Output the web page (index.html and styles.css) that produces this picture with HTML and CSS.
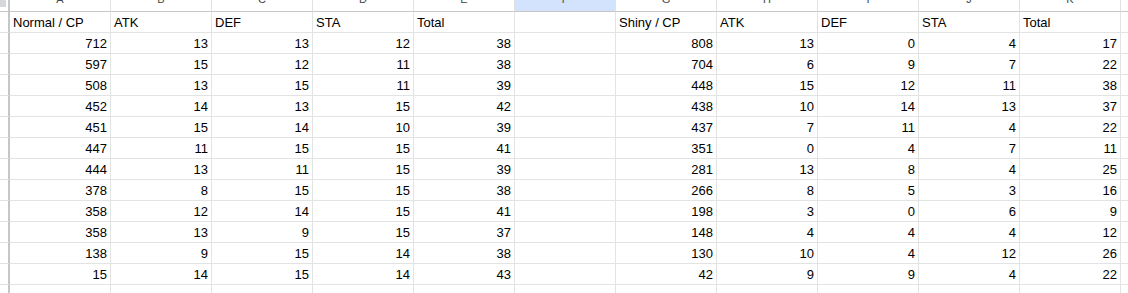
FILE: index.html
```html
<!DOCTYPE html>
<html>
<head>
<meta charset="utf-8">
<link rel="stylesheet" href="styles.css">
</head>
<body>
<div class="sheet">
  <div class="corner"><span class="knob"></span></div>
  <div class="ch"><span>A</span></div><div class="ch"><span>B</span></div><div class="ch"><span>C</span></div><div class="ch"><span>D</span></div><div class="ch"><span>E</span></div><div class="ch sel"><span>F</span></div><div class="ch"><span>G</span></div><div class="ch"><span>H</span></div><div class="ch"><span>I</span></div><div class="ch"><span>J</span></div><div class="ch"><span>K</span></div><div class="ch last"></div>

  <div class="rh"></div>
  <div class="c">Normal / CP</div><div class="c">ATK</div><div class="c">DEF</div><div class="c">STA</div><div class="c">Total</div><div class="c"></div><div class="c">Shiny / CP</div><div class="c">ATK</div><div class="c">DEF</div><div class="c">STA</div><div class="c">Total</div><div class="c last"></div>

  <div class="rh"></div>
  <div class="c n">712</div><div class="c n">13</div><div class="c n">13</div><div class="c n">12</div><div class="c n">38</div><div class="c"></div><div class="c n">808</div><div class="c n">13</div><div class="c n">0</div><div class="c n">4</div><div class="c n">17</div><div class="c last"></div>

  <div class="rh"></div>
  <div class="c n">597</div><div class="c n">15</div><div class="c n">12</div><div class="c n">11</div><div class="c n">38</div><div class="c"></div><div class="c n">704</div><div class="c n">6</div><div class="c n">9</div><div class="c n">7</div><div class="c n">22</div><div class="c last"></div>

  <div class="rh"></div>
  <div class="c n">508</div><div class="c n">13</div><div class="c n">15</div><div class="c n">11</div><div class="c n">39</div><div class="c"></div><div class="c n">448</div><div class="c n">15</div><div class="c n">12</div><div class="c n">11</div><div class="c n">38</div><div class="c last"></div>

  <div class="rh"></div>
  <div class="c n">452</div><div class="c n">14</div><div class="c n">13</div><div class="c n">15</div><div class="c n">42</div><div class="c"></div><div class="c n">438</div><div class="c n">10</div><div class="c n">14</div><div class="c n">13</div><div class="c n">37</div><div class="c last"></div>

  <div class="rh"></div>
  <div class="c n">451</div><div class="c n">15</div><div class="c n">14</div><div class="c n">10</div><div class="c n">39</div><div class="c"></div><div class="c n">437</div><div class="c n">7</div><div class="c n">11</div><div class="c n">4</div><div class="c n">22</div><div class="c last"></div>

  <div class="rh"></div>
  <div class="c n">447</div><div class="c n">11</div><div class="c n">15</div><div class="c n">15</div><div class="c n">41</div><div class="c"></div><div class="c n">351</div><div class="c n">0</div><div class="c n">4</div><div class="c n">7</div><div class="c n">11</div><div class="c last"></div>

  <div class="rh"></div>
  <div class="c n">444</div><div class="c n">13</div><div class="c n">11</div><div class="c n">15</div><div class="c n">39</div><div class="c"></div><div class="c n">281</div><div class="c n">13</div><div class="c n">8</div><div class="c n">4</div><div class="c n">25</div><div class="c last"></div>

  <div class="rh"></div>
  <div class="c n">378</div><div class="c n">8</div><div class="c n">15</div><div class="c n">15</div><div class="c n">38</div><div class="c"></div><div class="c n">266</div><div class="c n">8</div><div class="c n">5</div><div class="c n">3</div><div class="c n">16</div><div class="c last"></div>

  <div class="rh"></div>
  <div class="c n">358</div><div class="c n">12</div><div class="c n">14</div><div class="c n">15</div><div class="c n">41</div><div class="c"></div><div class="c n">198</div><div class="c n">3</div><div class="c n">0</div><div class="c n">6</div><div class="c n">9</div><div class="c last"></div>

  <div class="rh"></div>
  <div class="c n">358</div><div class="c n">13</div><div class="c n">9</div><div class="c n">15</div><div class="c n">37</div><div class="c"></div><div class="c n">148</div><div class="c n">4</div><div class="c n">4</div><div class="c n">4</div><div class="c n">12</div><div class="c last"></div>

  <div class="rh"></div>
  <div class="c n">138</div><div class="c n">9</div><div class="c n">15</div><div class="c n">14</div><div class="c n">38</div><div class="c"></div><div class="c n">130</div><div class="c n">10</div><div class="c n">4</div><div class="c n">12</div><div class="c n">26</div><div class="c last"></div>

  <div class="rh"></div>
  <div class="c n">15</div><div class="c n">14</div><div class="c n">15</div><div class="c n">14</div><div class="c n">43</div><div class="c"></div><div class="c n">42</div><div class="c n">9</div><div class="c n">9</div><div class="c n">4</div><div class="c n">22</div><div class="c last"></div>

  <div class="rh"></div>
  <div class="c"></div><div class="c"></div><div class="c"></div><div class="c"></div><div class="c"></div><div class="c"></div><div class="c"></div><div class="c"></div><div class="c"></div><div class="c"></div><div class="c"></div><div class="c last"></div>
</div>
</body>
</html>
```

FILE: styles.css
```css
html, body {
  margin: 0;
  padding: 0;
  background: #ffffff;
  overflow: hidden;
}

.sheet {
  display: grid;
  grid-template-columns: 10px repeat(11, 101px) 1fr;
  grid-template-rows: 12px repeat(14, 21px);
  width: 1128px;
  height: 293px;
  overflow: hidden;
  font-family: Arial, "Liberation Sans", sans-serif;
  font-size: 13px;
  color: #000000;
}

.corner {
  box-sizing: border-box;
  border-right: 2px solid #c4c7c5;
  border-bottom: 1px solid #c4c7c5;
  background: #ffffff;
  position: relative;
}

.corner .knob {
  position: absolute;
  left: 0;
  top: 0;
  width: 6px;
  height: 7px;
  background: #d5d7da;
}

.ch {
  box-sizing: border-box;
  border-right: 1px solid #e1e1e1;
  border-bottom: 1px solid #c4c7c5;
  background: #ffffff;
  overflow: hidden;
  text-align: center;
  font-family: Arial, "Liberation Sans", sans-serif;
  font-size: 11px;
  color: #444746;
}

.ch span {
  display: block;
  line-height: 12px;
  margin-top: -7px;
}

.ch.sel {
  background: #d3e3fd;
}

.ch.last, .c.last {
  border-right: none;
}

.rh {
  box-sizing: border-box;
  border-right: 2px solid #c4c7c5;
  border-bottom: 1px solid #e1e1e1;
  background: #ffffff;
}

.c {
  box-sizing: border-box;
  border-right: 1px solid #e2e3e3;
  border-bottom: 1px solid #e2e3e3;
  padding: 1px 3px 0 3px;
  line-height: 19px;
  white-space: nowrap;
  overflow: hidden;
}

.c.n {
  text-align: right;
}
```
